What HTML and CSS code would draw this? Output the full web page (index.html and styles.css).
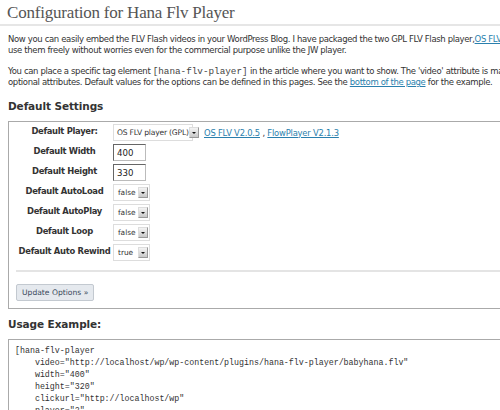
FILE: index.html
```html
<!DOCTYPE html>
<html>
<head>
<meta charset="utf-8">
<link rel="stylesheet" href="styles.css">
</head>
<body>
<div class="wrap">
  <h2 class="title">Configuration for Hana Flv Player</h2>
  <p class="text">Now you can easily embed the FLV Flash videos in your WordPress Blog. I have packaged the two GPL FLV Flash player,<a href="#">OS FLV</a> and <a href="#">FlowPlayer</a> so you can<br>use them freely without worries even for the commercial purpose unlike the JW player.</p>
  <p class="text">You can place a specific tag element <code>[hana-flv-player]</code> in the article where you want to show. The 'video' attribute is mandatory and others are<br>optional attributes. Default values for the options can be defined in this pages. See the <a href="#">bottom of the page</a> for the example.</p>
  <h3 class="head">Default Settings</h3>
  <div class="box">
    <div class="form">
      <div class="label">Default Player:</div>
      <div class="field">
        <span class="select wide">OS FLV player (GPL)<span class="arrow"></span></span>
        <span class="links"><a href="#">OS FLV V2.0.5</a> , <a href="#">FlowPlayer V2.1.3</a></span>
      </div>
      <div class="label">Default Width</div>
      <div class="field"><span class="input">400</span></div>
      <div class="label">Default Height</div>
      <div class="field"><span class="input">330</span></div>
      <div class="label">Default AutoLoad</div>
      <div class="field"><span class="select">false<span class="arrow"></span></span></div>
      <div class="label">Default AutoPlay</div>
      <div class="field"><span class="select">false<span class="arrow"></span></span></div>
      <div class="label">Default Loop</div>
      <div class="field"><span class="select">false<span class="arrow"></span></span></div>
      <div class="label">Default Auto Rewind</div>
      <div class="field"><span class="select">true<span class="arrow"></span></span></div>
    </div>
    <div class="sep"></div>
    <span class="button">Update Options »</span>
  </div>
  <h3 class="head usage">Usage Example:</h3>
  <pre class="code">[hana-flv-player
    video="http://localhost/wp/wp-content/plugins/hana-flv-player/babyhana.flv"
    width="400"
    height="320"
    clickurl="http://localhost/wp"
    player="2"
    autoplay="false"
    loop="false"
/]</pre>
</div>
</body>
</html>
```
FILE: styles.css
```css
html, body {
  margin: 0;
  padding: 0;
  background: #fff;
  overflow: hidden;
}
body {
  width: 500px;
  height: 410px;
}
.wrap {
  width: 620px;
  padding: 0 0 0 8px;
  color: #333;
  font-family: "DejaVu Sans", sans-serif;
  font-size: 8.5px;
  letter-spacing: -0.2px;
}
.title {
  margin: 0 0 0 -8px;
  padding: 0 0 0 7px;
  height: 24px;
  font-family: "Liberation Serif", serif;
  font-weight: normal;
  font-size: 17px;
  line-height: 25px;
  letter-spacing: -0.2px;
  color: #555;
  border-bottom: 2px solid #e6e6e6;
}
.text {
  margin: 8px 0 0 0;
  line-height: 11px;
  white-space: nowrap;
  letter-spacing: -0.36px;
}
.text + .text { margin-top: 10px; }
a { color: #2a7fad; text-decoration: underline; }
code {
  font-family: "Liberation Mono", monospace;
  font-size: 9.3px;
  letter-spacing: 0;
  color: #444;
}
.head {
  margin: 12px 0 0 0;
  font-size: 10.5px;
  line-height: 12px;
  font-weight: bold;
  letter-spacing: -0.1px;
  color: #333;
}
.head.usage { margin-top: 9px; }
.box {
  margin-top: 9px;
  border: 1px solid #aaa;
  border-right: none;
  padding: 2px 0 7px 7px;
}
.form {
  display: grid;
  grid-template-columns: 97px auto;
  row-gap: 3px;
  font-size: 8.4px;
}
.label {
  text-align: center;
  font-weight: bold;
  color: #333;
  line-height: 15px;
  height: 17px;
  white-space: nowrap;
  letter-spacing: -0.3px;
}
.field {
  display: flex;
  align-items: center;
  gap: 11px;
  height: 17px;
}
.select {
  display: inline-flex;
  align-items: center;
  justify-content: space-between;
  height: 15px;
  width: 30px;
  padding: 0 1px 0 4px;
  border: 1px solid #ddd;
  background: #fff;
  font-size: 7.4px;
  letter-spacing: 0;
  color: #333;
  white-space: nowrap;
}
.select.wide { width: 74px; padding-left: 3px; letter-spacing: -0.2px; font-size: 7.6px; }
.arrow {
  position: relative;
  width: 8px;
  height: 9px;
  flex: none;
  background: linear-gradient(#f4f4f4, #c8c8c8);
  border: 1px solid #999;
  border-top-color: #ddd;
  border-left-color: #ddd;
}
.arrow::after {
  content: "";
  position: absolute;
  left: 2px;
  top: 4px;
  border-left: 2px solid transparent;
  border-right: 2px solid transparent;
  border-top: 2px solid #111;
}
.input {
  display: inline-block;
  width: 28px;
  height: 15px;
  line-height: 16px;
  padding-left: 3px;
  border: 1px solid #bbb;
  border-top-color: #666;
  border-left-color: #666;
  font-size: 8.6px;
  letter-spacing: 0;
  color: #222;
}
.links { font-size: 8.4px; }
.sep {
  margin-top: 9px;
  height: 2px;
  background: #e4e4e4;
}
.button {
  display: inline-block;
  margin-top: 12px;
  padding: 0 5px;
  height: 15px;
  line-height: 15px;
  border: 1px solid #c3c9d0;
  border-radius: 2px;
  background: #e5e9ee;
  color: #3a4a5c;
  font-size: 7.6px;
  letter-spacing: 0;
}
.code {
  margin: 9px 0 0 0;
  border: 1px solid #aaa;
  border-right: none;
  padding: 5px 0 0 6px;
  font-family: "Liberation Mono", monospace;
  font-size: 8.3px;
  line-height: 12px;
  letter-spacing: 0;
  color: #333;
}
```
